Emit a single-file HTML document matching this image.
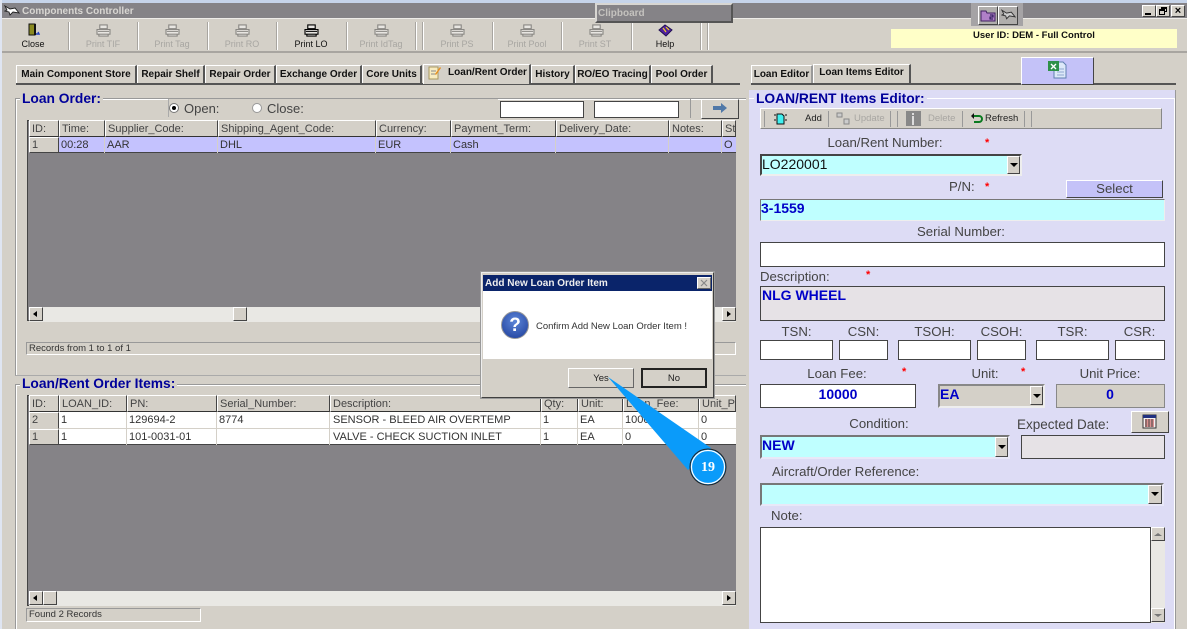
<!DOCTYPE html>
<html><head><meta charset="utf-8"><title>Components Controller</title>
<style>
html,body{margin:0;padding:0}
body{width:1187px;height:629px;overflow:hidden;position:relative;background:#d4d0c8;font-family:"Liberation Sans",sans-serif;color:#333;font-size:12px}
div,span,svg{position:absolute;box-sizing:border-box}
.t{white-space:nowrap;line-height:14px}
.c{text-align:center}
.b{font-weight:bold;color:#111}
.tb{font-size:9px;text-align:center;width:70px;top:38px;line-height:12px;color:#a8a6a2;white-space:nowrap}
.tb.on{color:#111}
.sep{top:22px;width:2px;height:28px;border-left:1px solid #a8a5a0;border-right:1px solid #fff}
.tab{top:65px;height:18px;background:#d4d0c8;border-top:1px solid #fff;border-left:1px solid #fff;border-right:2px solid #555;font-size:10px;font-weight:bold;color:#111;line-height:18px;text-align:center;white-space:nowrap}
.gl{color:#00009a;font-weight:bold;font-size:13.8px;line-height:16px;background:#d4d0c8;padding:0 2px;white-space:nowrap}
.h{background:#d4d0c8;border-right:1px solid #444;border-bottom:1px solid #333;border-top:1px solid #fff;border-left:1px solid #fff;height:17px;font-size:11px;line-height:17px;padding-left:2px;color:#444;white-space:nowrap;overflow:hidden}
.d{height:16px;border-right:1px solid #d4d0c8;border-bottom:1px solid #d4d0c8;font-size:11px;line-height:17px;padding-left:2px;color:#333;white-space:nowrap;overflow:hidden}
.ra{background:#d4d0c8;border:1px solid;border-color:#fff #444 #444 #fff}
.in{border:1px solid;border-color:#444;background:#fff}
.cy{background:#bfffff;border:2px solid;border-color:#777 #e8e8f8 #e8e8f8 #777}
.lb{font-size:13.2px;line-height:14px;color:#444;white-space:nowrap}
.st{color:#f00;font-size:11px;line-height:12px;font-weight:bold}
.v{color:#0000c8;font-weight:bold;font-size:14px;line-height:15px;white-space:nowrap}
.ar{width:0;height:0;border-left:4px solid transparent;border-right:4px solid transparent;border-top:4px solid #000}
</style></head><body>
<svg width="0" height="0" style="display:none"><defs>
<symbol id="pr" viewBox="0 0 16 14"><path d="M4 1h8v4H4zM1 6h14v5H1zM3 11h10v2H3z" fill="#e8e6e2" stroke="currentColor" stroke-width="1.2"/><path d="M2 8h12" stroke="currentColor"/></symbol>
</defs></svg>

<!-- window frame -->
<div style="left:0;top:0;width:1187px;height:3px;background:#c6d4ea"></div>
<div style="left:0;top:0;width:2px;height:629px;background:#dfe5f2"></div>
<div style="left:2px;top:3px;width:1185px;height:15px;background:#858387"></div>
<div style="left:2px;top:18px;width:1185px;height:1px;background:#eeece8"></div>
<svg style="left:4px;top:5px" width="16" height="12" viewBox="0 0 16 12"><path d="M1 1l5 3 5-1 4 5-6-1-3 3-1-3-4-1 2-1z" fill="#fff" stroke="#222" stroke-width=".9"/></svg>
<div class="t" style="left:22px;top:5px;font-size:10px;font-weight:bold;color:#d8d6d2">Components Controller</div>

<!-- toolbar -->
<div style="left:2px;top:51px;width:1185px;height:2px;background:#a8a5a0"></div>
<div class="sep" style="left:68px"></div><div class="sep" style="left:137px"></div><div class="sep" style="left:207px"></div><div class="sep" style="left:276px"></div><div class="sep" style="left:346px"></div><div class="sep" style="left:415px"></div><div class="sep" style="left:422px"></div><div class="sep" style="left:492px"></div><div class="sep" style="left:561px"></div><div class="sep" style="left:631px"></div><div class="sep" style="left:700px"></div><div class="sep" style="left:707px"></div>

<svg style="left:27px;top:23px" width="14" height="14" viewBox="0 0 14 14"><path d="M2 1h6v11H2z" fill="#8a8a20" stroke="#111"/><path d="M8 1v11" stroke="#111" stroke-width="2"/><path d="M9 11l3 0-1-2" fill="none" stroke="#2040c0" stroke-width="1.4"/></svg>
<div class="tb on" style="left:-2px">Close</div>
<svg style="left:96px;top:24px;color:#8a8884" width="15" height="13"><use href="#pr"/></svg><div class="tb" style="left:68px">Print TIF</div>
<svg style="left:165px;top:24px;color:#8a8884" width="15" height="13"><use href="#pr"/></svg><div class="tb" style="left:137px">Print Tag</div>
<svg style="left:235px;top:24px;color:#8a8884" width="15" height="13"><use href="#pr"/></svg><div class="tb" style="left:207px">Print RO</div>
<svg style="left:304px;top:24px;color:#000" width="15" height="13"><use href="#pr"/></svg><div class="tb on" style="left:276px">Print LO</div>
<svg style="left:374px;top:24px;color:#8a8884" width="15" height="13"><use href="#pr"/></svg><div class="tb" style="left:346px">Print IdTag</div>
<svg style="left:450px;top:24px;color:#8a8884" width="15" height="13"><use href="#pr"/></svg><div class="tb" style="left:422px">Print PS</div>
<svg style="left:520px;top:24px;color:#8a8884" width="15" height="13"><use href="#pr"/></svg><div class="tb" style="left:492px">Print Pool</div>
<svg style="left:589px;top:24px;color:#8a8884" width="15" height="13"><use href="#pr"/></svg><div class="tb" style="left:560px">Print ST</div>
<svg style="left:658px;top:24px" width="15" height="13" viewBox="0 0 15 13"><path d="M1 6l6-5 7 5-6 6z" fill="#5020a0" stroke="#201050"/><path d="M5 4l3 4M8 3l3 3" stroke="#f0d020" stroke-width="1.2"/></svg>
<div class="tb on" style="left:630px">Help</div>

<!-- clipboard -->
<div style="left:595px;top:3px;width:138px;height:20px;background:#858387;border:2px solid;border-color:#d8d6d2 #555 #555 #d8d6d2"></div>
<div class="t" style="left:598px;top:7px;font-size:10px;font-weight:bold;color:#c4c2be">Clipboard</div>

<!-- top right -->
<div style="left:971px;top:3px;width:52px;height:23px;background:#a5a3a5"></div>
<div class="ra" style="left:978px;top:6px;width:20px;height:19px;background:#b0aeac"></div>
<div class="ra" style="left:998px;top:6px;width:20px;height:19px;background:#b0aeac"></div>
<svg style="left:980px;top:8px" width="16" height="15" viewBox="0 0 16 15"><path d="M1 3h5l1 2h8v8H1z" fill="#b080c8" stroke="#402060"/><path d="M10 7h3v2h-3v2h3" fill="none" stroke="#201050"/></svg>
<svg style="left:1001px;top:8px" width="15" height="14" viewBox="0 0 16 12"><path d="M1 1l5 3 5-1 4 5-6-1-3 3-1-3-4-1 2-1z" fill="#ccc" stroke="#333"/></svg>
<div class="ra" style="left:1142px;top:5px;width:14px;height:12px"></div><div style="left:1145px;top:13px;width:6px;height:2px;background:#000"></div>
<div class="ra" style="left:1156px;top:5px;width:14px;height:12px"></div><div style="left:1161px;top:7px;width:6px;height:5px;border:1px solid #000;border-top-width:2px"></div><div style="left:1159px;top:9px;width:6px;height:6px;border:1px solid #000;border-top-width:2px;background:#d4d0c8"></div>
<div class="ra" style="left:1171px;top:5px;width:14px;height:12px"></div>
<div class="t c" style="left:1171px;top:4px;width:14px;font-size:11px;font-weight:bold;color:#000">×</div>
<div style="left:891px;top:29px;width:286px;height:19px;background:#ffffc8"></div>
<div class="t c" style="left:891px;top:28px;width:286px;font-size:9.5px;font-weight:bold;color:#111;line-height:15px">User ID: DEM - Full Control</div>

<!-- tabs -->
<div style="left:16px;top:83px;width:724px;height:2px;background:#555"></div>
<div style="left:751px;top:83px;width:425px;height:2px;background:#555"></div>
<div class="tab" style="left:16px;width:121px">Main Component Store</div>
<div class="tab" style="left:137px;width:68px">Repair Shelf</div>
<div class="tab" style="left:205px;width:71px">Repair Order</div>
<div class="tab" style="left:276px;width:86px">Exchange Order</div>
<div class="tab" style="left:362px;width:60px">Core Units</div>
<div class="tab" style="left:423px;top:64px;width:108px;height:20px;padding-left:22px;line-height:16px">Loan/Rent Order</div>
<svg style="left:428px;top:65px" width="14" height="15" viewBox="0 0 14 15"><path d="M1 2h9v12H1z" fill="#f8ecc0" stroke="#a89860"/><path d="M3 6h5M3 9h5" stroke="#888"/><path d="M7 9l5-7 1 1-5 7z" fill="#e89020"/></svg>
<div class="tab" style="left:531px;width:44px">History</div>
<div class="tab" style="left:575px;width:76px">RO/EO Tracing</div>
<div class="tab" style="left:651px;width:62px">Pool Order</div>
<div class="tab" style="left:751px;width:62px;border-right-color:#999">Loan Editor</div>
<div class="tab" style="left:813px;top:64px;width:98px;height:19px;line-height:16px">Loan Items Editor</div>
<div style="left:1021px;top:57px;width:73px;height:28px;background:#c4c2f8;border:1px solid;border-color:#fff #444 #444 #fff"></div>
<svg style="left:1047px;top:60px" width="21" height="20" viewBox="0 0 21 20"><path d="M7 2h9l3 3v13H7z" fill="#dce8f8" stroke="#6080b0"/><path d="M10 9h7M10 12h7M10 15h7" stroke="#90a8d0"/><path d="M1 1h11v10H1z" fill="#2e9048"/><path d="M4 4l5 5M9 4l-5 5" stroke="#fff" stroke-width="1.4"/></svg>

<!-- Loan Order group -->
<div style="left:15px;top:98px;width:731px;height:278px;border:1px solid #999;border-right:none;border-bottom-color:#aaa;box-shadow:inset 1px 1px 0 #fff"></div>
<div class="gl" style="left:20px;top:91px">Loan Order:</div>
<div style="left:168px;top:99px;width:330px;height:18px;border-left:1px solid #aaa;background:#d4d0c8"></div>
<div style="left:169px;top:103px;width:10px;height:10px;border-radius:50%;background:#fff;border:1px solid #777"></div>
<div style="left:172px;top:106px;width:4px;height:4px;border-radius:50%;background:#000"></div>
<div class="t" style="left:184px;top:102px;font-size:13px;color:#444">Open:</div>
<div style="left:252px;top:103px;width:10px;height:10px;border-radius:50%;background:#fff;border:1px solid #999"></div>
<div class="t" style="left:267px;top:102px;font-size:13px;color:#444">Close:</div>
<div class="in" style="left:500px;top:101px;width:84px;height:17px"></div>
<div class="in" style="left:594px;top:101px;width:85px;height:17px"></div>
<div style="left:690px;top:99px;width:1px;height:19px;background:#999"></div>
<div class="ra" style="left:701px;top:99px;width:38px;height:20px"></div>
<svg style="left:712px;top:102px" width="16" height="12" viewBox="0 0 16 12"><path d="M1 4h8V1l6 5-6 5V8H1z" fill="#5078a8"/></svg>

<!-- Grid 1 -->
<div style="left:27px;top:120px;width:709px;height:201px;background:#858387;border:1px solid #444;border-right:none"></div>
<div class="h" style="left:29px;top:120px;width:30px">ID:</div>
<div class="h" style="left:59px;top:120px;width:46px">Time:</div>
<div class="h" style="left:105px;top:120px;width:113px">Supplier_Code:</div>
<div class="h" style="left:218px;top:120px;width:158px">Shipping_Agent_Code:</div>
<div class="h" style="left:376px;top:120px;width:75px">Currency:</div>
<div class="h" style="left:451px;top:120px;width:105px">Payment_Term:</div>
<div class="h" style="left:556px;top:120px;width:113px">Delivery_Date:</div>
<div class="h" style="left:669px;top:120px;width:53px">Notes:</div>
<div class="h" style="left:722px;top:120px;width:14px">St</div>
<div class="h" style="left:29px;top:137px;width:30px;height:16px;border-bottom-color:#444;line-height:15px">1</div>
<div style="left:59px;top:137px;width:677px;height:16px;background:#c4c2fe;border-bottom:1px solid #444"></div>
<div class="d" style="left:59px;top:137px;width:46px;border-bottom:none">00:28</div>
<div class="d" style="left:105px;top:137px;width:113px;border-bottom:none">AAR</div>
<div class="d" style="left:218px;top:137px;width:158px;border-bottom:none">DHL</div>
<div class="d" style="left:376px;top:137px;width:75px;border-bottom:none">EUR</div>
<div class="d" style="left:451px;top:137px;width:105px;border-bottom:none">Cash</div>
<div class="d" style="left:556px;top:137px;width:113px;border-bottom:none"></div>
<div class="d" style="left:669px;top:137px;width:53px;border-bottom:none"></div>
<div class="d" style="left:722px;top:137px;width:14px;border:none">O</div>
<div style="left:29px;top:307px;width:707px;height:15px;background:#e9e8e4"></div>
<div class="ra" style="left:29px;top:307px;width:14px;height:14px"></div>
<div style="left:33px;top:311px;width:0;height:0;border-top:3px solid transparent;border-bottom:3px solid transparent;border-right:4px solid #000"></div>
<div class="ra" style="left:233px;top:307px;width:14px;height:14px"></div>
<div class="ra" style="left:722px;top:307px;width:14px;height:14px"></div>
<div style="left:727px;top:311px;width:0;height:0;border-top:3px solid transparent;border-bottom:3px solid transparent;border-left:4px solid #000"></div>
<div style="left:26px;top:342px;width:710px;height:13px;border:1px solid;border-color:#999 #fff #fff #999"></div>
<div class="t" style="left:29px;top:343px;font-size:9.5px;line-height:12px;color:#333">Records from 1 to 1 of 1</div>

<!-- Items group -->
<div style="left:15px;top:384px;width:731px;height:245px;border:1px solid #999;border-right:none;border-bottom:none;box-shadow:inset 1px 1px 0 #fff"></div>
<div class="gl" style="left:20px;top:376px">Loan/Rent Order Items:</div>

<!-- Grid 2 -->
<div style="left:27px;top:395px;width:709px;height:211px;background:#858387;border:1px solid #444;border-right:none"></div>
<div class="h" style="left:29px;top:395px;width:30px">ID:</div>
<div class="h" style="left:59px;top:395px;width:68px">LOAN_ID:</div>
<div class="h" style="left:127px;top:395px;width:90px">PN:</div>
<div class="h" style="left:217px;top:395px;width:113px">Serial_Number:</div>
<div class="h" style="left:330px;top:395px;width:211px">Description:</div>
<div class="h" style="left:541px;top:395px;width:37px">Qty:</div>
<div class="h" style="left:578px;top:395px;width:45px">Unit:</div>
<div class="h" style="left:623px;top:395px;width:76px">Loan_Fee:</div>
<div class="h" style="left:699px;top:395px;width:37px">Unit_P</div>
<div style="left:59px;top:412px;width:677px;height:33px;background:#fff;border-bottom:1px solid #444"></div>
<div class="h" style="left:29px;top:412px;width:30px;height:17px;border-bottom-color:#d4d0c8;line-height:15px">2</div>
<div class="h" style="left:29px;top:429px;width:30px;height:16px;border-bottom-color:#444;line-height:15px">1</div>
<div class="d" style="left:59px;top:412px;width:68px;height:17px">1</div>
<div class="d" style="left:127px;top:412px;width:90px;height:17px">129694-2</div>
<div class="d" style="left:217px;top:412px;width:113px;height:17px">8774</div>
<div class="d" style="left:330px;top:412px;width:211px;height:17px;padding-left:3px">SENSOR - BLEED AIR OVERTEMP</div>
<div class="d" style="left:541px;top:412px;width:37px;height:17px">1</div>
<div class="d" style="left:578px;top:412px;width:45px;height:17px">EA</div>
<div class="d" style="left:623px;top:412px;width:76px;height:17px">10000</div>
<div class="d" style="left:699px;top:412px;width:37px;height:17px;border-right:none">0</div>
<div class="d" style="left:59px;top:429px;width:68px;border-bottom:none">1</div>
<div class="d" style="left:127px;top:429px;width:90px;border-bottom:none">101-0031-01</div>
<div class="d" style="left:217px;top:429px;width:113px;border-bottom:none"></div>
<div class="d" style="left:330px;top:429px;width:211px;border-bottom:none;padding-left:3px">VALVE - CHECK SUCTION INLET</div>
<div class="d" style="left:541px;top:429px;width:37px;border-bottom:none">1</div>
<div class="d" style="left:578px;top:429px;width:45px;border-bottom:none">EA</div>
<div class="d" style="left:623px;top:429px;width:76px;border-bottom:none">0</div>
<div class="d" style="left:699px;top:429px;width:37px;border:none">0</div>
<div style="left:29px;top:591px;width:707px;height:15px;background:#e9e8e4"></div>
<div class="ra" style="left:29px;top:591px;width:14px;height:14px"></div>
<div style="left:33px;top:595px;width:0;height:0;border-top:3px solid transparent;border-bottom:3px solid transparent;border-right:4px solid #000"></div>
<div class="ra" style="left:43px;top:591px;width:14px;height:14px"></div>
<div class="ra" style="left:722px;top:591px;width:14px;height:14px"></div>
<div style="left:727px;top:595px;width:0;height:0;border-top:3px solid transparent;border-bottom:3px solid transparent;border-left:4px solid #000"></div>
<div style="left:26px;top:608px;width:175px;height:14px;border:1px solid;border-color:#999 #fff #fff #999"></div>
<div class="t" style="left:29px;top:609px;font-size:9.5px;line-height:12px;color:#333">Found 2 Records</div>

<!-- Right panel -->
<div style="left:749px;top:90px;width:427px;height:539px;background:#dddcf5;border-right:1px solid #999"></div>
<div style="left:749px;top:98px;width:426px;height:531px;border-top:1px solid #fff;border-right:1px solid #fff"></div>
<div class="gl" style="left:754px;top:91px;background:#dddcf5;color:#00009a">LOAN/RENT Items Editor:</div>
<div class="ra" style="left:760px;top:108px;width:402px;height:21px;border-color:#fff #888 #888 #fff"></div>
<div style="left:764px;top:111px;width:1px;height:16px;background:#999"></div>
<svg style="left:773px;top:112px" width="14" height="13" viewBox="0 0 14 13"><path d="M4 2h5l2 2v8H4z" fill="#40f0f0" stroke="#111"/><path d="M1 3h2M1 8h2M12 3h2M12 8h2" stroke="#111"/></svg>
<div class="t" style="left:805px;top:112px;font-size:9.5px;color:#222">Add</div>
<div style="left:828px;top:111px;width:1px;height:16px;background:#999"></div>
<svg style="left:836px;top:112px" width="14" height="13" viewBox="0 0 14 13"><path d="M1 1h5v4H1zM8 7h5v5H8z" fill="#ccc" stroke="#888"/></svg>
<div class="t" style="left:854px;top:112px;font-size:9.5px;color:#a8a6a2">Update</div>
<div style="left:890px;top:111px;width:1px;height:16px;background:#999"></div><div style="left:897px;top:111px;width:1px;height:16px;background:#999"></div>
<div style="left:906px;top:111px;width:15px;height:15px;background:#888"></div><div style="left:912px;top:116px;width:2px;height:9px;background:#ddd"></div><div style="left:912px;top:113px;width:2px;height:2px;background:#ddd"></div>
<div class="t" style="left:928px;top:112px;font-size:9.5px;color:#a8a6a2">Delete</div>
<div style="left:962px;top:111px;width:1px;height:16px;background:#999"></div>
<svg style="left:970px;top:112px" width="13" height="13" viewBox="0 0 13 13"><path d="M2 4h7a3 3 0 0 1 0 6H4" fill="none" stroke="#0a7a20" stroke-width="2"/><path d="M1 4l3-3v6z" fill="#111"/></svg>
<div class="t" style="left:985px;top:112px;font-size:9.5px;color:#222">Refresh</div>
<div style="left:1024px;top:111px;width:1px;height:16px;background:#999"></div><div style="left:1031px;top:111px;width:1px;height:16px;background:#999"></div>

<div class="lb c" style="left:785px;top:136px;width:200px">Loan/Rent Number:</div>
<div class="st" style="left:985px;top:137px">*</div>
<div class="cy" style="left:760px;top:154px;width:262px;height:22px;border-color:#444 #eee #eee #444"></div>
<div class="t" style="left:762px;top:157px;font-size:14px;color:#111">LO220001</div>
<div class="ra" style="left:1007px;top:156px;width:13px;height:18px"></div>
<div class="ar" style="left:1010px;top:163px"></div>

<div class="lb" style="left:949px;top:180px">P/N:</div>
<div class="st" style="left:985px;top:181px">*</div>
<div style="left:1066px;top:180px;width:97px;height:18px;background:#c4c2f8;border:1px solid;border-color:#fff #444 #444 #fff"></div>
<div class="lb c" style="left:1066px;top:182px;width:97px">Select</div>
<div class="cy" style="left:760px;top:199px;width:405px;height:22px;border-width:1px;border-color:#777 #eee #eee #777"></div>
<div class="v" style="left:761px;top:201px">3-1559</div>

<div class="lb c" style="left:760px;top:225px;width:402px">Serial Number:</div>
<div class="in" style="left:760px;top:242px;width:405px;height:25px"></div>
<div class="lb" style="left:760px;top:270px">Description:</div>
<div class="st" style="left:866px;top:269px">*</div>
<div class="in" style="left:760px;top:286px;width:405px;height:35px;background:#e6e2e6"></div>
<div class="v" style="left:762px;top:288px">NLG WHEEL</div>

<div class="lb c" style="left:760px;top:325px;width:73px">TSN:</div>
<div class="lb c" style="left:839px;top:325px;width:49px">CSN:</div>
<div class="lb c" style="left:898px;top:325px;width:73px">TSOH:</div>
<div class="lb c" style="left:977px;top:325px;width:49px">CSOH:</div>
<div class="lb c" style="left:1036px;top:325px;width:73px">TSR:</div>
<div class="lb c" style="left:1115px;top:325px;width:49px">CSR:</div>
<div class="in" style="left:760px;top:340px;width:73px;height:20px"></div>
<div class="in" style="left:839px;top:340px;width:49px;height:20px"></div>
<div class="in" style="left:898px;top:340px;width:73px;height:20px"></div>
<div class="in" style="left:977px;top:340px;width:49px;height:20px"></div>
<div class="in" style="left:1036px;top:340px;width:73px;height:20px"></div>
<div class="in" style="left:1115px;top:340px;width:50px;height:20px"></div>

<div class="lb c" style="left:787px;top:367px;width:100px">Loan Fee:</div>
<div class="st" style="left:902px;top:366px">*</div>
<div class="lb c" style="left:955px;top:367px;width:60px">Unit:</div>
<div class="st" style="left:1021px;top:366px">*</div>
<div class="lb c" style="left:1060px;top:367px;width:100px">Unit Price:</div>
<div class="in" style="left:760px;top:384px;width:156px;height:24px"></div>
<div class="v c" style="left:760px;top:387px;width:156px">10000</div>
<div style="left:938px;top:384px;width:107px;height:24px;background:#d4d0c8;border:2px solid;border-color:#888 #eee #eee #888"></div>
<div class="v" style="left:940px;top:387px">EA</div>
<div class="ra" style="left:1030px;top:386px;width:13px;height:19px"></div>
<div class="ar" style="left:1033px;top:394px"></div>
<div class="in" style="left:1056px;top:384px;width:109px;height:24px;background:#d4d0c8;border-color:#888"></div>
<div class="v c" style="left:1056px;top:387px;width:108px">0</div>
<div class="ra" style="left:1131px;top:411px;width:38px;height:22px"></div>
<svg style="left:1142px;top:414px" width="15" height="15" viewBox="0 0 15 15"><path d="M1 1h13v13H1z" fill="#f4f0f0" stroke="#333"/><path d="M1 1h13v3H1z" fill="#203080"/><path d="M3 6h9M3 8h9M3 10h9M3 12h9" stroke="#c03030"/><path d="M4 5v8M7 5v8M10 5v8" stroke="#444"/></svg>

<div class="lb c" style="left:829px;top:417px;width:100px">Condition:</div>
<div class="lb" style="left:1017px;top:418px;font-size:13.5px">Expected Date:</div>
<div class="cy" style="left:760px;top:435px;width:250px;height:24px"></div>
<div class="v" style="left:762px;top:438px">NEW</div>
<div class="ra" style="left:995px;top:437px;width:13px;height:20px"></div>
<div class="ar" style="left:998px;top:445px"></div>
<div class="in" style="left:1021px;top:435px;width:144px;height:24px;background:#e6e2e6"></div>

<div class="lb" style="left:772px;top:465px">Aircraft/Order Reference:</div>
<div class="cy" style="left:760px;top:483px;width:404px;height:23px"></div>
<div class="ra" style="left:1148px;top:485px;width:14px;height:19px"></div>
<div class="ar" style="left:1151px;top:492px"></div>
<div class="lb" style="left:771px;top:509px">Note:</div>
<div class="in" style="left:760px;top:527px;width:391px;height:96px"></div>
<div style="left:1151px;top:527px;width:14px;height:96px;background:#e9e8e4"></div>
<div class="ra" style="left:1151px;top:527px;width:14px;height:14px"></div>
<div class="ar" style="left:1154px;top:533px;border-top:none;border-bottom:3px solid #777"></div>
<div class="ra" style="left:1151px;top:608px;width:14px;height:14px"></div>
<div class="ar" style="left:1154px;top:614px;border-top-width:3px;border-top-color:#777"></div>

<!-- Dialog -->
<div style="left:481px;top:272px;width:233px;height:126px;background:#d4d0c8;border:1px solid;border-color:#eee #404040 #404040 #eee;box-shadow:0 0 0 1px #999"></div>
<div style="left:483px;top:275px;width:229px;height:16px;background:#0a246a"></div>
<div class="t" style="left:485px;top:276px;font-size:10px;font-weight:bold;line-height:15px;color:#eee">Add New Loan Order Item</div>
<div style="left:697px;top:277px;width:14px;height:12px;background:#d4d0c8;border:1px solid;border-color:#fff #666 #666 #fff"></div>
<svg style="left:697px;top:277px" width="14" height="12"><path d="M4 3l6 6M10 3l-6 6" stroke="#888" stroke-width="1.2"/></svg>
<div style="left:483px;top:291px;width:229px;height:68px;background:#fff"></div>
<div style="left:501px;top:311px;width:28px;height:28px;border-radius:50%;background:radial-gradient(circle at 50% 35%,#5d86d8,#1c3c98);border:1px solid #999"></div>
<div class="t c" style="left:501px;top:317px;width:28px;font-size:19px;line-height:18px;font-weight:bold;color:#fff">?</div>
<div class="t" style="left:536px;top:320px;font-size:9.5px;color:#333">Confirm Add New Loan Order Item !</div>
<div class="ra" style="left:568px;top:368px;width:66px;height:20px;border-color:#fff #666 #666 #fff"></div>
<div class="t c" style="left:568px;top:372px;width:66px;font-size:9.5px;color:#222">Yes</div>
<div class="ra" style="left:641px;top:368px;width:66px;height:20px;border:2px solid;border-color:#222 #222 #222 #222"></div>
<div class="t c" style="left:641px;top:372px;width:66px;font-size:9.5px;color:#222">No</div>

<!-- Callout -->
<svg style="left:600px;top:370px" width="140" height="125" viewBox="600 370 140 125"><path d="M608 377L711 448 688 470z" fill="#0a9bfa"/><circle cx="708" cy="467" r="18" fill="#0a9bfa" stroke="#222" stroke-width="1"/><circle cx="708" cy="467" r="16.5" fill="none" stroke="#fff" stroke-width="1.2"/></svg>
<div class="t c" style="left:688px;top:461px;width:40px;font-family:'Liberation Serif',serif;font-size:14px;font-weight:bold;color:#fff">19</div>
</body></html>
